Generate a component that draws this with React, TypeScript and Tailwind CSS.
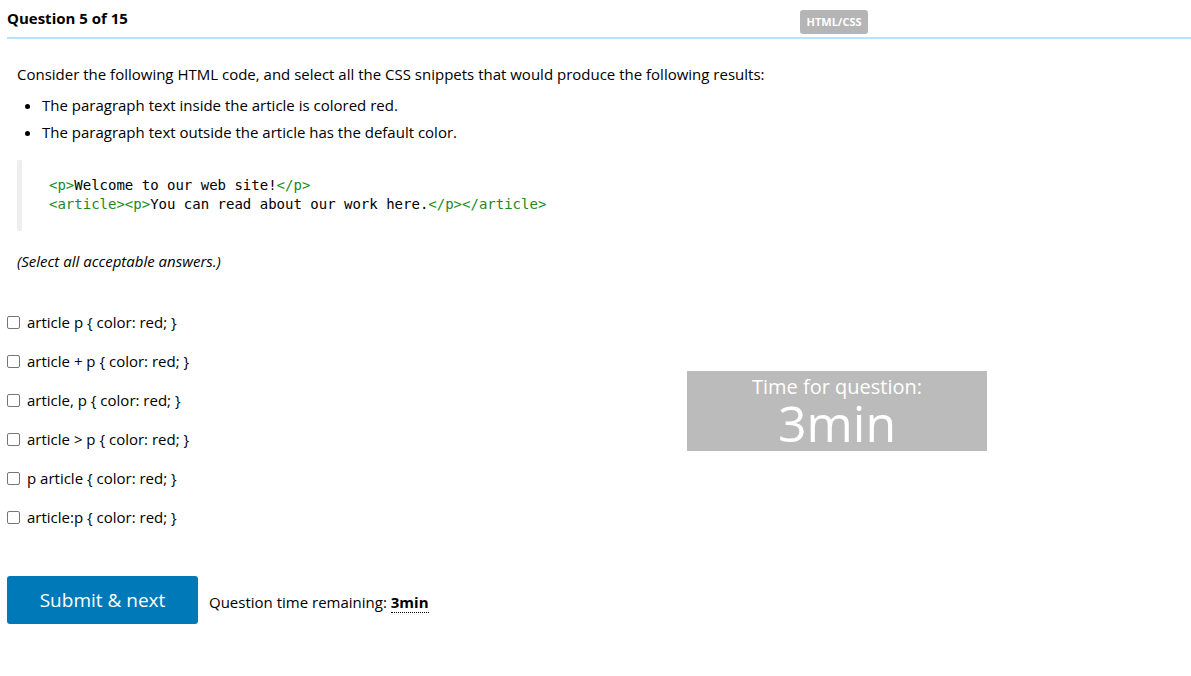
import React from "react";

const options = [
  "article p { color: red; }",
  "article + p { color: red; }",
  "article, p { color: red; }",
  "article > p { color: red; }",
  "p article { color: red; }",
  "article:p { color: red; }",
];

export default function App() {
  return (
    <div className="min-h-[676px] bg-white text-black" style={{ fontFamily: '"Open Sans", sans-serif' }}>
      <div className="ml-[7px]">
        <div className="flex items-start justify-between border-b-2 border-[#b9e3fb] h-[39px]">
          <div className="text-[15px] font-bold leading-[24px] mt-[6px]">Question 5 of 15</div>
          <div className="mr-[323px] mt-[10px] h-[24px] w-[68px] rounded-[3px] bg-[#b5b5b5] text-white text-[11px] font-bold flex items-center justify-center">
            HTML/CSS
          </div>
        </div>

        <div className="pl-[10px] pt-[23px]">
          <p className="text-[15px] leading-[24px]">
            Consider the following HTML code, and select all the CSS snippets that would produce the following results:
          </p>
          <ul className="list-disc pl-[25px] mt-[7px] text-[15px] leading-[24px] flex flex-col gap-[3px]">
            <li>The paragraph text inside the article is colored red.</li>
            <li>The paragraph text outside the article has the default color.</li>
          </ul>
          <div className="mt-[16px] border-l-[5px] border-[#eeeeee] rounded-[2px] pl-[27px] pt-[16px] pb-[17px] text-[14px] leading-[19px]" style={{ fontFamily: '"DejaVu Sans Mono", monospace' }}>
            <div>
              <span className="text-[#1a8a1a]">&lt;p&gt;</span>Welcome to our web site!<span className="text-[#1a8a1a]">&lt;/p&gt;</span>
            </div>
            <div>
              <span className="text-[#1a8a1a]">&lt;article&gt;&lt;p&gt;</span>You can read about our work here.<span className="text-[#1a8a1a]">&lt;/p&gt;&lt;/article&gt;</span>
            </div>
          </div>
          <p className="mt-[18px] italic text-[15px] leading-[24px]">(Select all acceptable answers.)</p>
        </div>

        <div className="flex mt-[37px]">
          <div className="w-[680px] flex flex-col gap-[15px]">
            {options.map((o) => (
              <label key={o} className="flex items-center h-[24px] text-[15px] leading-[24px]">
                <span className="w-[13px] h-[13px] border border-[#767676] rounded-[2px] bg-white mr-[7px]" />
                <span>{o}</span>
              </label>
            ))}
          </div>
          <div className="mt-[61px] w-[300px] h-[80px] bg-[#bbbbbb] text-white flex flex-col items-center">
            <div className="text-[20px] leading-[22px] mt-[5px]">Time for question:</div>
            <div className="text-[50px] leading-[50px]">3min</div>
          </div>
        </div>

        <div className="flex items-center mt-[47px]">
          <button className="w-[191px] h-[48px] rounded-[3px] bg-[#0079b8] text-white text-[19px]">Submit &amp; next</button>
          <div className="ml-[11px] text-[15px] leading-[24px] mt-[4px]">
            Question time remaining:{" "}
            <span className="font-bold border-b border-dotted border-black">3min</span>
          </div>
        </div>
      </div>
    </div>
  );
}
